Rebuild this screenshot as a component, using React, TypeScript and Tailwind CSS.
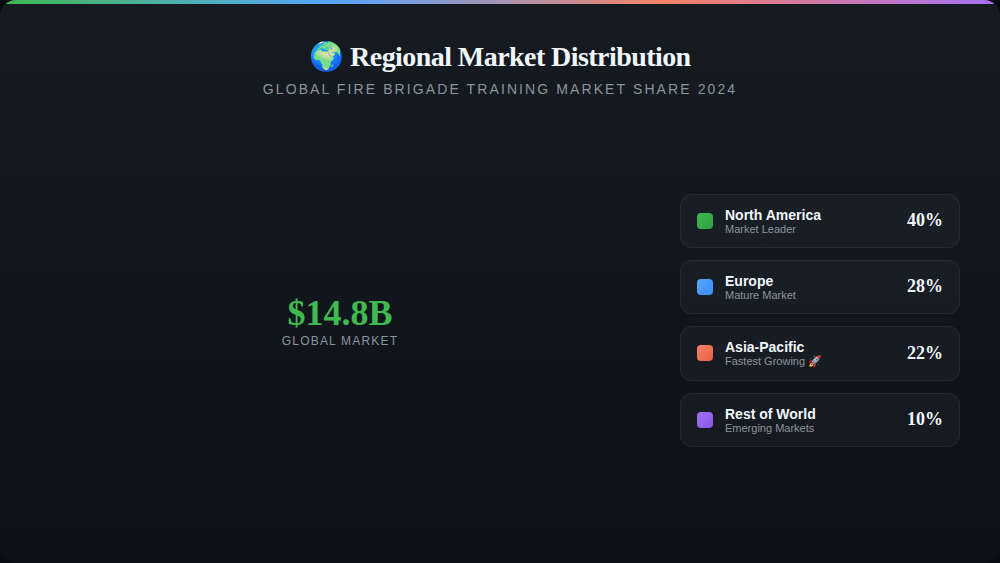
const regions = [
  { name: "North America", note: "Market Leader", pct: "40%", swatch: "from-[#3fb950] to-[#2ea043]" },
  { name: "Europe", note: "Mature Market", pct: "28%", swatch: "from-[#58a6ff] to-[#388bfd]" },
  { name: "Asia-Pacific", note: "Fastest Growing 🚀", pct: "22%", swatch: "from-[#f78166] to-[#ea6045]" },
  { name: "Rest of World", note: "Emerging Markets", pct: "10%", swatch: "from-[#a371f7] to-[#8957e5]" },
];

const sans = "font-['Liberation_Sans','Noto_Color_Emoji',sans-serif]";
const serif = "font-['Liberation_Serif','Noto_Color_Emoji',serif]";

export default function App() {
  return (
    <div className={`h-[563px] w-[1000px] overflow-hidden bg-[#0a0d12] ${sans}`}>
      <div className="relative flex h-full flex-col overflow-hidden rounded-2xl bg-gradient-to-b from-[#161b22] to-[#0d1117] px-10 pt-[41px] pb-[19.3px]">
        {/* Top bar */}
        <div className="absolute inset-x-0 top-0 h-1 [background-image:linear-gradient(90deg,#3fb950,#58a6ff,#f78166,#a371f7)]" />

        <div className="text-center">
          <h1 className={`text-[28px] leading-[32px] font-bold tracking-[-0.56px] text-[#f0f6fc] ${serif}`}>
            🌍 Regional Market Distribution
          </h1>
          <p className="mt-[8px] text-sm leading-4 tracking-[2.1px] text-[#8b949e] uppercase">
            Global Fire Brigade Training Market Share 2024
          </p>
        </div>

        <div className="flex flex-1 items-center gap-10">
          <div className="flex flex-1 flex-col items-center">
            <div className={`text-[36px] leading-[41px] font-bold text-[#3fb950] ${serif}`}>$14.8B</div>
            <div className="text-xs leading-[14px] tracking-[1.2px] text-[#8b949e] uppercase">Global Market</div>
          </div>

          <div className="flex w-[280px] flex-col gap-3">
            {regions.map((r) => (
              <div
                key={r.name}
                className="flex h-[54.4px] items-center rounded-xl border border-white/[0.06] bg-white/[0.03] px-4 pb-[0.2px]"
              >
                <div className={`h-4 w-4 rounded-[4px] bg-gradient-to-br ${r.swatch}`} />
                <div className="ml-3 flex-1">
                  <div className="text-sm leading-4 font-semibold text-[#f0f6fc]">{r.name}</div>
                  <div className="text-[11px] leading-[12px] text-[#8b949e]">{r.note}</div>
                </div>
                <div className={`pb-[1.8px] text-lg leading-[26px] font-bold text-[#f0f6fc] ${serif}`}>{r.pct}</div>
              </div>
            ))}
          </div>
        </div>
      </div>
    </div>
  );
}
